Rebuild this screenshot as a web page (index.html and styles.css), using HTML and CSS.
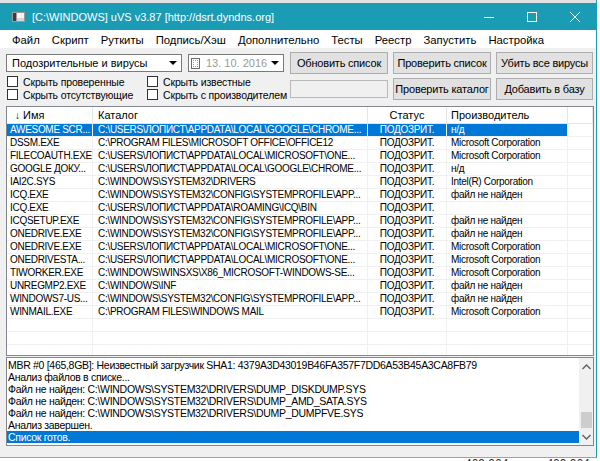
FILE: index.html
```html
<!DOCTYPE html>
<html lang="ru">
<head>
<meta charset="utf-8">
<title>uVS v3.87</title>
<link rel="stylesheet" href="styles.css">
</head>
<body>
<div class="window">
  <div class="titlebar">
    <svg class="appicon" width="13" height="10" viewBox="0 0 13 10">
      <rect x="0" y="0" width="13" height="10" fill="#9a9a9a"/>
      <rect x="1" y="1" width="3" height="8" fill="#3c3c3c"/>
      <rect x="5" y="1" width="7" height="8" fill="#f4f4f4"/>
      <rect x="5" y="6" width="7" height="3" fill="#d6d6d6"/>
    </svg>
    <span class="title">[C:\WINDOWS] uVS v3.87 [http://dsrt.dyndns.org]</span>
    <div class="controls">
      <span class="ctl"><svg width="10" height="10" viewBox="0 0 10 10"><line x1="0" y1="5.5" x2="10" y2="5.5" stroke="#fff" stroke-width="1"/></svg></span>
      <span class="ctl"><svg width="10" height="10" viewBox="0 0 10 10"><rect x="0.5" y="0.5" width="9" height="9" fill="none" stroke="#fff" stroke-width="1"/></svg></span>
      <span class="ctl"><svg width="10" height="10" viewBox="0 0 10 10"><path d="M0 0 L10 10 M10 0 L0 10" stroke="#fff" stroke-width="1"/></svg></span>
    </div>
  </div>

  <div class="menubar">
    <span>Файл</span><span>Скрипт</span><span>Руткиты</span><span>Подпись/Хэш</span><span>Дополнительно</span><span>Тесты</span><span>Реестр</span><span>Запустить</span><span>Настройка</span>
  </div>

  <div class="toolbar">
    <div class="left">
      <div class="selects">
        <div class="combo"><span class="ctext">Подозрительные и вирусы</span><span class="drop"><span class="tri"></span></span></div>
        <div class="date"><span class="dchk"></span><span class="dtext">13. 10. 2016</span><span class="drop"><span class="tri"></span></span></div>
      </div>
      <div class="checks">
        <div class="chk"><span class="box"></span>Скрыть проверенные</div>
        <div class="chk"><span class="box"></span>Скрыть известные</div>
        <div class="chk"><span class="box"></span>Скрыть отсутствующие</div>
        <div class="chk"><span class="box"></span>Скрыть с производителем</div>
      </div>
    </div>
    <div class="buttons">
      <div class="btn">Обновить список</div>
      <div class="btn">Проверить список</div>
      <div class="btn">Убить все вирусы</div>
      <div class="field"></div>
      <div class="btn">Проверить каталог</div>
      <div class="btn">Добавить в базу</div>
    </div>
  </div>

  <div class="table">
    <div class="row head">
      <div class="c name"><span class="arrow">↓</span> Имя</div>
      <div class="c cat">Каталог</div>
      <div class="c st">Статус</div>
      <div class="c man">Производитель</div>
      <div class="c last"></div>
    </div>
    <div class="row sel">
      <div class="c name">AWESOME SCR...</div><div class="c cat">C:\USERS\ЛОПИСТ\APPDATA\LOCAL\GOOGLE\CHROME...</div><div class="c st">ПОДОЗРИТ.</div><div class="c man">н/д</div><div class="c last"></div>
    </div>
    <div class="row">
      <div class="c name">DSSM.EXE</div><div class="c cat">C:\PROGRAM FILES\MICROSOFT OFFICE\OFFICE12</div><div class="c st">ПОДОЗРИТ.</div><div class="c man">Microsoft Corporation</div><div class="c last"></div>
    </div>
    <div class="row">
      <div class="c name">FILECOAUTH.EXE</div><div class="c cat">C:\USERS\ЛОПИСТ\APPDATA\LOCAL\MICROSOFT\ONE...</div><div class="c st">ПОДОЗРИТ.</div><div class="c man">Microsoft Corporation</div><div class="c last"></div>
    </div>
    <div class="row">
      <div class="c name">GOOGLE ДОКУ...</div><div class="c cat">C:\USERS\ЛОПИСТ\APPDATA\LOCAL\GOOGLE\CHROME...</div><div class="c st">ПОДОЗРИТ.</div><div class="c man">н/д</div><div class="c last"></div>
    </div>
    <div class="row">
      <div class="c name">IAI2C.SYS</div><div class="c cat">C:\WINDOWS\SYSTEM32\DRIVERS</div><div class="c st">ПОДОЗРИТ.</div><div class="c man">Intel(R) Corporation</div><div class="c last"></div>
    </div>
    <div class="row">
      <div class="c name">ICQ.EXE</div><div class="c cat">C:\WINDOWS\SYSTEM32\CONFIG\SYSTEMPROFILE\APP...</div><div class="c st">ПОДОЗРИТ.</div><div class="c man">файл не найден</div><div class="c last"></div>
    </div>
    <div class="row">
      <div class="c name">ICQ.EXE</div><div class="c cat">C:\USERS\ЛОПИСТ\APPDATA\ROAMING\ICQ\BIN</div><div class="c st">ПОДОЗРИТ.</div><div class="c man"></div><div class="c last"></div>
    </div>
    <div class="row">
      <div class="c name">ICQSETUP.EXE</div><div class="c cat">C:\WINDOWS\SYSTEM32\CONFIG\SYSTEMPROFILE\APP...</div><div class="c st">ПОДОЗРИТ.</div><div class="c man">файл не найден</div><div class="c last"></div>
    </div>
    <div class="row">
      <div class="c name">ONEDRIVE.EXE</div><div class="c cat">C:\WINDOWS\SYSTEM32\CONFIG\SYSTEMPROFILE\APP...</div><div class="c st">ПОДОЗРИТ.</div><div class="c man">файл не найден</div><div class="c last"></div>
    </div>
    <div class="row">
      <div class="c name">ONEDRIVE.EXE</div><div class="c cat">C:\USERS\ЛОПИСТ\APPDATA\LOCAL\MICROSOFT\ONE...</div><div class="c st">ПОДОЗРИТ.</div><div class="c man">Microsoft Corporation</div><div class="c last"></div>
    </div>
    <div class="row">
      <div class="c name">ONEDRIVESTA...</div><div class="c cat">C:\USERS\ЛОПИСТ\APPDATA\LOCAL\MICROSOFT\ONE...</div><div class="c st">ПОДОЗРИТ.</div><div class="c man">Microsoft Corporation</div><div class="c last"></div>
    </div>
    <div class="row">
      <div class="c name">TIWORKER.EXE</div><div class="c cat">C:\WINDOWS\WINSXS\X86_MICROSOFT-WINDOWS-SE...</div><div class="c st">ПОДОЗРИТ.</div><div class="c man">Microsoft Corporation</div><div class="c last"></div>
    </div>
    <div class="row">
      <div class="c name">UNREGMP2.EXE</div><div class="c cat">C:\WINDOWS\INF</div><div class="c st">ПОДОЗРИТ.</div><div class="c man">файл не найден</div><div class="c last"></div>
    </div>
    <div class="row">
      <div class="c name">WINDOWS7-US...</div><div class="c cat">C:\WINDOWS\SYSTEM32\CONFIG\SYSTEMPROFILE\APP...</div><div class="c st">ПОДОЗРИТ.</div><div class="c man">файл не найден</div><div class="c last"></div>
    </div>
    <div class="row">
      <div class="c name">WINMAIL.EXE</div><div class="c cat">C:\PROGRAM FILES\WINDOWS MAIL</div><div class="c st">ПОДОЗРИТ.</div><div class="c man">Microsoft Corporation</div><div class="c last"></div>
    </div>
    <div class="row"><div class="c name"></div><div class="c cat"></div><div class="c st"></div><div class="c man"></div><div class="c last"></div></div>
    <div class="row"><div class="c name"></div><div class="c cat"></div><div class="c st"></div><div class="c man"></div><div class="c last"></div></div>
    <div class="row"><div class="c name"></div><div class="c cat"></div><div class="c st"></div><div class="c man"></div><div class="c last"></div></div>
  </div>

  <div class="log">
    <div class="lines">
      <div class="ln">MBR #0 [465,8GB]: Неизвестный загрузчик SHA1: 4379A3D43019B46FA357F7DD6A53B45A3CA8FB79</div>
      <div class="ln">Анализ файлов в списке...</div>
      <div class="ln">Файл не найден: C:\WINDOWS\SYSTEM32\DRIVERS\DUMP_DISKDUMP.SYS</div>
      <div class="ln">Файл не найден: C:\WINDOWS\SYSTEM32\DRIVERS\DUMP_AMD_SATA.SYS</div>
      <div class="ln">Файл не найден: C:\WINDOWS\SYSTEM32\DRIVERS\DUMP_DUMPFVE.SYS</div>
      <div class="ln">Анализ завершен.</div>
      <div class="ln lsel">Список готов.</div>
    </div>
    <div class="vscroll">
      <div class="sbtn"><svg width="9" height="6" viewBox="0 0 9 6"><path d="M0.5 5 L4.5 1 L8.5 5" fill="none" stroke="#606060" stroke-width="1.4"/></svg></div>
      <div class="track"><div class="thumb"></div></div>
      <div class="sbtn"><svg width="9" height="6" viewBox="0 0 9 6"><path d="M0.5 1 L4.5 5 L8.5 1" fill="none" stroke="#606060" stroke-width="1.4"/></svg></div>
    </div>
  </div>

  <div class="status"></div>
</div>
<div class="behind"><span>409 064</span><span>409 064</span><span>@</span></div>
</body>
</html>
```

FILE: styles.css
```css
html, body {
  margin: 0;
  padding: 0;
}
body {
  width: 600px;
  height: 461px;
  overflow: hidden;
  background: #ffffff;
  font-family: "Liberation Sans", Arial, sans-serif;
  color: #000;
}
.window {
  width: 597px;
  box-sizing: border-box;
  border-right: 1px solid #1a9cb5;
  background: #f0f0f0;
}

/* title bar */
.titlebar {
  height: 27px;
  border-top: 3px solid #e2e2e2;
  background: #1a9cb5;
  display: flex;
  align-items: center;
  color: #fff;
  font-size: 11px;
}
.appicon {
  margin-left: 12px;
  flex: none;
}
.title {
  margin-left: 7px;
  white-space: nowrap;
}
.controls {
  margin-left: auto;
  display: flex;
  height: 27px;
}
.ctl {
  width: 43px;
  height: 27px;
  display: flex;
  align-items: center;
  justify-content: center;
}

/* menu */
.menubar {
  height: 18px;
  box-sizing: border-box;
  padding: 2px 0 0 12px;
  background: #fff;
  display: flex;
  align-items: center;
  gap: 12px;
  font-size: 11.3px;
  white-space: nowrap;
}

/* toolbar */
.toolbar {
  height: 57px;
  box-sizing: border-box;
  padding: 4px 0 0 6px;
  display: flex;
  font-size: 11px;
}
.left {
  width: 278px;
  flex: none;
}
.selects {
  margin-top: 2px;
  height: 18px;
  display: flex;
  gap: 6px;
}
.combo, .date {
  height: 18px;
  box-sizing: border-box;
  border: 1px solid #7a7a7a;
  background: #fff;
  display: flex;
  align-items: center;
}
.combo {
  width: 176px;
}
.date {
  width: 96px;
}
.ctext {
  padding-left: 5px;
  flex: 1;
  white-space: nowrap;
}
.dchk {
  width: 9px;
  height: 11px;
  box-sizing: border-box;
  border: 1px solid #6d6d6d;
  margin-left: 2px;
  outline: 1px dotted #9a9a9a;
  outline-offset: -3px;
}
.dtext {
  margin-left: 6px;
  flex: 1;
  color: #9a9a9a;
  white-space: nowrap;
}
.drop {
  width: 14px;
  height: 16px;
  display: flex;
  align-items: center;
  justify-content: center;
  margin-right: 1px;
}
.tri {
  width: 0;
  height: 0;
  border-left: 4px solid transparent;
  border-right: 4px solid transparent;
  border-top: 4px solid #000;
}
.checks {
  margin-top: 3px;
  display: grid;
  grid-template-columns: 140px auto;
  grid-auto-rows: 13px;
  font-size: 10.5px;
  letter-spacing: -0.15px;
}
.chk {
  display: flex;
  align-items: center;
  white-space: nowrap;
  padding-left: 1px;
}
.box {
  width: 11px;
  height: 11px;
  box-sizing: border-box;
  border: 1px solid #333;
  background: #fff;
  margin-right: 5px;
  flex: none;
}
.buttons {
  margin-left: 6px;
  display: grid;
  grid-template-columns: 98px 98px 97px;
  grid-template-rows: 22px 22px;
  column-gap: 5px;
  row-gap: 4px;
}
.btn {
  box-sizing: border-box;
  background: #e1e1e1;
  border: 1px solid #adadad;
  display: flex;
  align-items: center;
  justify-content: center;
  white-space: nowrap;
  font-size: 11px;
  letter-spacing: -0.2px;
}
.field {
  align-self: center;
  height: 18px;
  box-sizing: border-box;
  border: 1px solid #b9b9b9;
  background: #f0f0f0;
}

/* list */
.table {
  margin: 1px 0 0 6px;
  width: 588px;
  height: 250px;
  box-sizing: border-box;
  border: 1px solid #828790;
  background: #fff;
  overflow: hidden;
}
.row {
  display: grid;
  grid-template-columns: 86px 275px 79px 121px 25px;
  height: 13px;
  font-size: 10px;
  letter-spacing: -0.3px;
}
.c {
  box-sizing: border-box;
  border-right: 1px solid #f0f0f0;
  border-bottom: 1px solid #f0f0f0;
  line-height: 12px;
  white-space: nowrap;
  overflow: hidden;
}
.c.name { padding-left: 3px; }
.c.cat { padding-left: 5px; }
.c.st { text-align: center; }
.c.man { padding-left: 4px; }
.row.head {
  height: 17px;
  font-size: 11px;
  letter-spacing: 0;
}
.head .c {
  line-height: 16px;
  border-right-color: #e5e5e5;
  border-bottom-color: #e5e5e5;
}
.head .c.name { padding-left: 8px; }
.arrow {
  font-size: 10px;
}
.row.sel .c.name,
.row.sel .c.cat,
.row.sel .c.st,
.row.sel .c.man {
  background: #0078d7;
  color: #fff;
}

/* log */
.log {
  margin: 1px 0 0 6px;
  width: 588px;
  height: 89px;
  box-sizing: border-box;
  border: 1px solid #828790;
  background: #fff;
  display: grid;
  grid-template-columns: 572px 14px;
}
.lines {
  padding-top: 1px;
  overflow: hidden;
  font-size: 10.5px;
  letter-spacing: -0.3px;
}
.ln {
  height: 12px;
  line-height: 12px;
  padding-left: 1px;
  white-space: nowrap;
}
.ln.lsel {
  background: #0078d7;
  color: #fff;
}
.vscroll {
  display: flex;
  flex-direction: column;
  background: #f0f0f0;
}
.sbtn {
  height: 17px;
  display: flex;
  align-items: center;
  justify-content: center;
}
.track {
  flex: 1;
  display: flex;
  flex-direction: column;
  justify-content: flex-end;
  align-items: center;
}
.thumb {
  width: 11px;
  height: 16px;
  background: #cdcdcd;
}

.status {
  height: 11px;
  border-bottom: 1px solid #9aa3a8;
  background: #f0f0f0;
}

.behind {
  display: flex;
  gap: 38px;
  padding-left: 465px;
  font-size: 12px;
  line-height: 13px;
  color: #333;
  white-space: nowrap;
}
```
